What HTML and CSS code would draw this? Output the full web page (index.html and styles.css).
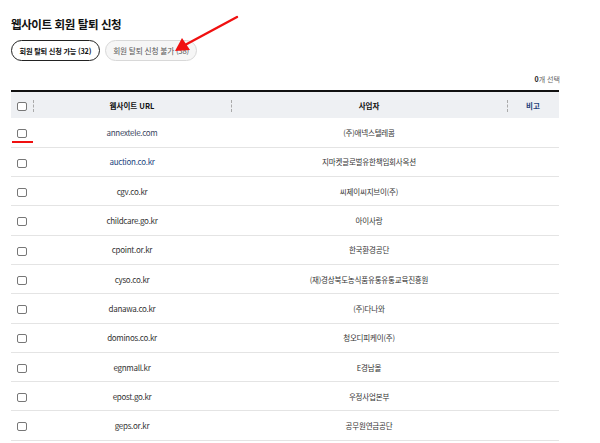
FILE: index.html
```html
<!DOCTYPE html>
<html lang="ko">
<head>
    <meta charset="UTF-8">
    <title>웹사이트 회원 탈퇴 신청</title>
    <link rel="stylesheet" href="styles.css">
</head>
<body>
    <div class="page">
        <h1 class="title">웹사이트 회원 탈퇴 신청</h1>
        <div class="tabs">
            <button class="tab active">회원 탈퇴 신청 가능 (32)</button>
            <button class="tab">회원 탈퇴 신청 불가 (38)</button>
        </div>
        <div class="count"><b>0</b>개 선택</div>

        <table class="list">
            <thead>
                <tr>
                    <th class="col-check"><span class="box"></span></th>
                    <th class="col-url">웹사이트 URL</th>
                    <th class="col-biz">사업자</th>
                    <th class="col-note">비고</th>
                </tr>
            </thead>
            <tbody>
                <tr><td><span class="box"></span></td><td class="url visited">annextele.com</td><td>(주)애넥스텔레콤</td><td></td></tr>
                <tr><td><span class="box"></span></td><td class="url link">auction.co.kr</td><td>지마켓글로벌유한책임회사옥션</td><td></td></tr>
                <tr><td><span class="box"></span></td><td class="url">cgv.co.kr</td><td>씨제이씨지브이(주)</td><td></td></tr>
                <tr><td><span class="box"></span></td><td class="url">childcare.go.kr</td><td>아이사랑</td><td></td></tr>
                <tr><td><span class="box"></span></td><td class="url">cpoint.or.kr</td><td>한국환경공단</td><td></td></tr>
                <tr><td><span class="box"></span></td><td class="url">cyso.co.kr</td><td>(재)경상북도농식품유통유통교육진흥원</td><td></td></tr>
                <tr><td><span class="box"></span></td><td class="url">danawa.co.kr</td><td>(주)다나와</td><td></td></tr>
                <tr><td><span class="box"></span></td><td class="url">dominos.co.kr</td><td>청오디피케이(주)</td><td></td></tr>
                <tr><td><span class="box"></span></td><td class="url">egnmall.kr</td><td>E경남몰</td><td></td></tr>
                <tr><td><span class="box"></span></td><td class="url">epost.go.kr</td><td>우정사업본부</td><td></td></tr>
                <tr><td><span class="box"></span></td><td class="url">geps.or.kr</td><td>공무원연금공단</td><td></td></tr>
            </tbody>
        </table>
    </div>

    <!-- 캡처용 표시 -->
    <div class="mark-line"></div>
    <svg class="mark-arrow" width="70" height="40" viewBox="0 0 70 40">
        <line x1="66" y1="3" x2="14" y2="31" stroke="#f01010" stroke-width="2.4" stroke-linecap="round"/>
        <polygon points="4,37 11,24 19,36" fill="#f01010"/>
    </svg>
</body>
</html>
```

FILE: styles.css
```css
* {
    margin: 0;
    padding: 0;
    box-sizing: border-box;
}

body {
    background-color: #fff;
    color: #222;
    font-family: "Noto Sans CJK KR", "Noto Sans", sans-serif;
}

.page {
    width: 560px;
    padding: 16px 0 0 11px;
}

.title {
    font-size: 11.5px;
    line-height: 16px;
    font-weight: bold;
    letter-spacing: -0.4px;
    color: #111;
}

.tabs {
    display: flex;
    gap: 5px;
    margin-top: 8px;
}

.tab {
    height: 21px;
    padding: 0 7.5px;
    border-radius: 11px;
    border: 1px solid #d8d8d8;
    background-color: #f6f6f6;
    color: #555;
    font-family: inherit;
    font-size: 7.7px;
    letter-spacing: -0.2px;
}

.tab.active {
    padding: 0 7.5px;
    border: 1.5px solid #222;
    background-color: #fff;
    color: #111;
    font-size: 7.2px;
    font-weight: bold;
}

.count {
    margin-top: 13px;
    text-align: right;
    font-size: 7px;
    line-height: 10px;
    color: #666;
}

.count b {
    color: #222;
}

.list {
    width: 548px;
    margin-top: 6px;
    border-collapse: collapse;
    border-top: 2px solid #111;
    table-layout: fixed;
}

.list th {
    height: 27px;
    background-color: #eef0f3;
    font-size: 7.5px;
    font-weight: bold;
    color: #111;
    position: relative;
}

.list th + th::before {
    content: "";
    position: absolute;
    left: 0;
    top: 8px;
    height: 12px;
    border-left: 1px dashed #aaa;
}

.col-check { width: 22px; }
.col-url { width: 198px; }
.col-biz { width: 276px; }
.list th.col-note { width: 52px; color: #1f3f7a; }

.list td {
    height: 29.3px;
    border-bottom: 1px solid #e4e4e4;
    text-align: center;
    font-size: 7.5px;
    color: #333;
    letter-spacing: -0.2px;
}

.list td:first-child,
.list th:first-child {
    text-align: left;
    padding-left: 6px;
}

.box {
    display: inline-block;
    width: 10px;
    height: 9px;
    border: 1px solid #777;
    border-radius: 2px;
    background-color: #fff;
    vertical-align: middle;
}

.list td.url {
    font-size: 8px;
    letter-spacing: -0.3px;
}

.list td.visited {
    color: #3b4660;
}

.list td.link {
    color: #23457e;
}

.mark-line {
    position: absolute;
    left: 12px;
    top: 141px;
    width: 21px;
    height: 2px;
    background-color: #f01010;
}

.mark-arrow {
    position: absolute;
    left: 171px;
    top: 14px;
}
```
